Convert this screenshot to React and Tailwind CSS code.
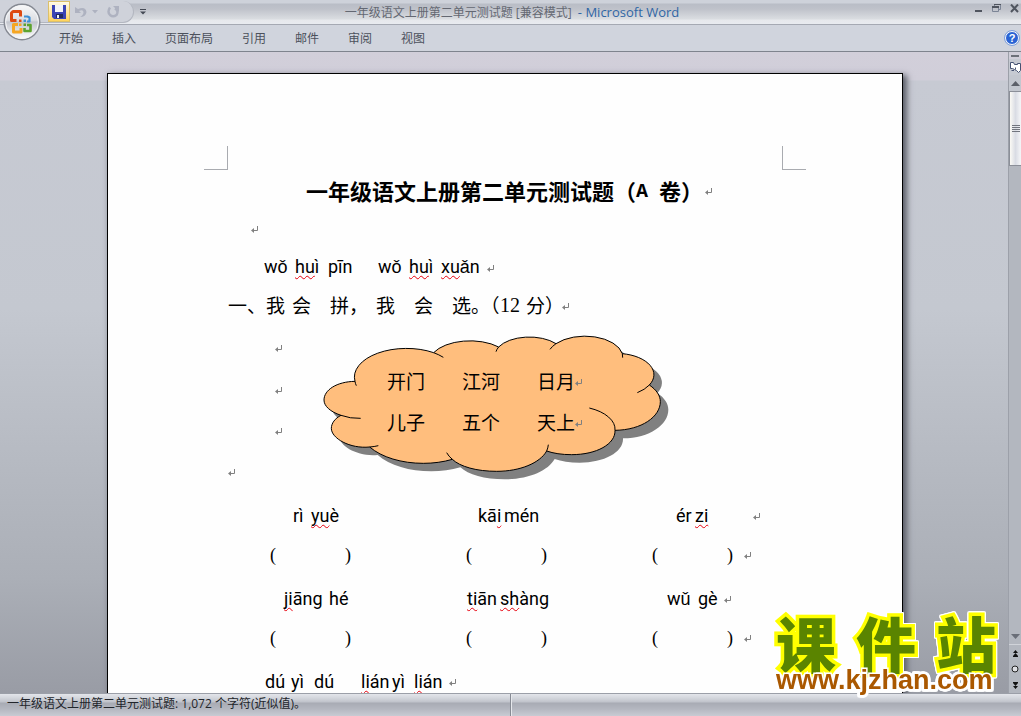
const RIBBON_TABS = ['开始', '插入', '页面布局', '引用', '邮件', '审阅', '视图']

// each word: cell width, text flagged by the spell checker, and the rest
const PINYIN_HEADING = [
  { w: 'w-[31px]', text: 'wǒ' },
  { w: 'w-[33px]', wavy: 'hu', text: 'ì' },
  { w: 'w-[50px]', text: 'pīn' },
  { w: 'w-[31px]', text: 'wǒ' },
  { w: 'w-[32px]', wavy: 'hu', text: 'ì' },
  { w: 'w-[46px]', wavy: 'xu', text: 'ǎn' },
]

const PINYIN_ROW_1 = [
  { w: 'w-[18px]', text: 'rì' },
  { w: 'w-[167px]', wavy: 'yu', text: 'è' },
  { w: 'w-[26px]', before: 'kā', wavy: 'i' },
  { w: 'w-[172px]', text: 'mén' },
  { w: 'w-[19px]', text: 'ér' },
  { w: 'w-[58px]', wavy: 'zi' },
]

const PINYIN_ROW_2 = [
  { w: 'w-[45px]', wavy: 'ji', text: 'āng' },
  { w: 'w-[138px]', text: 'hé' },
  { w: 'w-[33px]', wavy: 'ti', text: 'ān' },
  { w: 'w-[167px]', wavy: 'sh', text: 'àng' },
  { w: 'w-[31px]', text: 'wǔ' },
  { w: 'w-[26px]', text: 'gè' },
]

const PINYIN_ROW_3 = [
  { w: 'w-[26px]', text: 'dú' },
  { w: 'w-[23px]', text: 'yì' },
  { w: 'w-[47px]', text: 'dú' },
  { w: 'w-[31px]', wavy: 'li', text: 'án' },
  { w: 'w-[22px]', text: 'yì' },
  { w: 'w-[35px]', wavy: 'li', text: 'án' },
]

const CLOUD_WORDS = [
  ['开门', '江河', '日月'],
  ['儿子', '五个', '天上'],
]

const CLOUD_OUTLINE =
  'M285 169A156 86 0 0 1 521 83A122 64 0 0 1 716 66A103 54 0 0 1 888 56A114 64 0 0 1 1087 86A112 64 0 0 1 1168 180C1190 195 1201 212 1201 230C1201 275 1145 315 1065 316C1067 357 1010 389 935 389C905 389 880 385 860 378C840 414 780 439 710 439C650 439 600 425 577 403C550 411 520 415 490 415C425 415 365 397 329 366C270 372 214 340 214 310C214 295 225 280 243 271C210 260 192 243 192 225C192 195 230 170 285 169Z'

const CLOUD_CREASES =
  'M285 169Q286 176 289 182M521 83A156 86 0 0 1 550 97M716 66A103 54 0 0 0 708 80M888 56A114 64 0 0 0 870 73M1087 86L1088 98M1168 180A117 66 0 0 1 1132 203M1065 316A130 70 0 0 0 988 249M860 378Q864 369 865 359M577 403Q566 394 560 383M329 366Q343 365 355 362M243 271Q270 281 302 280'

function ReturnMark() {
  return (
    <svg viewBox="0 0 8 8" className="w-2 h-2 mt-[3px] flex-shrink-0" aria-hidden="true">
      <path d="M6.5 0V4.5H1.5" fill="none" stroke="#808080" />
      <path d="M0 4.5L3 2V7Z" fill="#808080" />
    </svg>
  )
}

function PinyinLine({ words, className }) {
  return (
    <p
      className={`flex items-center pt-[5px] whitespace-nowrap font-['Roboto',sans-serif] text-lg ${className}`}
    >
      {words.map(({ w, before, wavy, text }, i) => (
        <span key={i} className={`${w} flex-shrink-0`}>
          {before}
          {wavy && (
            <span className="underline decoration-wavy decoration-red-600 decoration-1 underline-offset-2 [text-decoration-skip-ink:none]">
              {wavy}
            </span>
          )}
          {text}
        </span>
      ))}
      <ReturnMark />
    </p>
  )
}

function BracketLine() {
  return (
    <p className="flex items-center h-[41px] pl-[42px] font-['Liberation_Serif',serif] text-lg">
      <span className="w-[75px]">(</span>
      <span className="w-[121px]">)</span>
      <span className="w-[75px]">(</span>
      <span className="w-[111px]">)</span>
      <span className="w-[75px]">(</span>
      <span className="w-[17px]">)</span>
      <ReturnMark />
    </p>
  )
}

function Cloud() {
  return (
    <div className="absolute left-[95px] top-[7px] w-[346px] h-[147px]">
      <svg viewBox="189 27 1038 441" className="absolute inset-0 w-full h-full" aria-hidden="true">
        <path d={CLOUD_OUTLINE} transform="translate(24 24)" fill="#808080" />
        <path d={CLOUD_OUTLINE} fill="#ffbe7d" stroke="#000" strokeWidth="3" />
        <path d={CLOUD_CREASES} fill="none" stroke="#000" strokeWidth="3" />
      </svg>
      <div className="relative pt-[27px] pl-16">
        {CLOUD_WORDS.map((row) => (
          <p key={row[0]} className="flex items-center h-[41px] text-[19px]">
            <span className="w-[75px]">{row[0]}</span>
            <span className="w-[75px]">{row[1]}</span>
            <span className="w-[38px]">{row[2]}</span>
            <ReturnMark />
          </p>
        ))}
      </div>
    </div>
  )
}

function OfficeButton() {
  return (
    <button aria-label="Office" className="absolute left-[3px] top-[3px] z-10">
      <svg viewBox="0 0 38 38" className="w-[38px] h-[38px]">
        <defs>
          <linearGradient id="orb" x1="0" y1="0" x2="0" y2="1">
            <stop offset="0" stopColor="#fafafb" />
            <stop offset="0.45" stopColor="#dcdee3" />
            <stop offset="0.5" stopColor="#c3c6ce" />
            <stop offset="1" stopColor="#ffffff" />
          </linearGradient>
        </defs>
        <circle cx="19" cy="19" r="17.8" fill="url(#orb)" stroke="#858992" strokeWidth="1.4" />
        <circle cx="19" cy="19" r="16.4" fill="none" stroke="#f4f5f7" />
        <g fill="none" strokeLinejoin="round">
          <path d="M13.500 17.500H8.500V10L10 8.500H17.500V13.500" stroke="#dd4a12" strokeWidth="3" />
          <path d="M21 13.500H24.500L26.500 14.500V18.500H24" stroke="#3d8fd6" strokeWidth="2.200" />
          <path d="M15 21.500H10.500V29H18V25" stroke="#f5a623" strokeWidth="3" />
          <path d="M24 22H27.500V28H21.500V25" stroke="#5da32e" strokeWidth="2.600" />
        </g>
        <path d="M16 16.500h2.500v2.500h-2.500z" fill="#dd4a12" />
        <path d="M20.500 16.500h2.500v2.500h-2.500z" fill="#3d8fd6" />
        <path d="M16 20.500h2.500v2.500h-2.500z" fill="#f5a623" />
        <path d="M20.500 20.500h2.500v2.500h-2.500z" fill="#5da32e" />
      </svg>
    </button>
  )
}

function QuickAccess() {
  return (
    <div className="flex items-center h-[22px] mt-px w-[134px] flex-shrink-0 pl-12 rounded-r-full border-r border-b border-[#b3b7c0] bg-[#cfd2da]">
      <button
        aria-label="保存"
        className="flex items-center justify-center w-[22px] h-[21px] flex-shrink-0 border border-[#dcc06a] bg-linear-to-b from-[#fffbe8] to-[#ffd35a]"
      >
        <svg viewBox="0 0 14 14" className="w-[14px] h-[14px]">
          <path d="M0 0H14V14H2L0 12Z" fill="#3b45b5" />
          <path d="M3 0H11V7H3Z" fill="#f2f4fb" />
          <path d="M4 9H11V13H4Z" fill="#222a5e" />
          <path d="M5 10H7V13H5Z" fill="#f2f4fb" />
        </svg>
      </button>
      <button aria-label="撤消" className="ml-[5px]">
        <svg viewBox="0 0 12 12" className="w-3 h-3">
          <path d="M0 1V7H6L4 5Q8 3 8.500 6Q8.500 9 5 11Q11 11 11.500 6Q10.500 0 3 3Z" fill="#aeb2c0" />
        </svg>
      </button>
      <svg viewBox="0 0 6 4" className="w-[6px] h-1 ml-[5px]" aria-hidden="true">
        <path d="M0 0H6L3 3.500Z" fill="#aeb2c0" />
      </svg>
      <button aria-label="恢复" className="ml-[9px]">
        <svg viewBox="0 0 12 12" className="w-3 h-3">
          <path d="M3 1.500Q0 6 3 9Q6 11.500 9.500 9Q12 5 8 2.500" fill="none" stroke="#aeb2c0" strokeWidth="2.400" />
          <path d="M6 0H12V6Z" fill="#aeb2c0" />
        </svg>
      </button>
    </div>
  )
}

function TitleBar() {
  return (
    <header className="flex items-start h-[25px] flex-shrink-0 border-b border-[#a5a9b3] bg-[linear-gradient(#ced2da_0px,#ced2da_3px,#b9bdc6_4px,#bfc2ca_9px,#dadde1_19px,#e6e8ec_20px,#e8ebf0_24px)]">
      <QuickAccess />
      <button aria-label="自定义快速访问工具栏" className="mt-[9px] ml-[6px]">
        <svg viewBox="0 0 6 6" className="w-[6px] h-[6px]">
          <path d="M0 0H6V1H0ZM0 2.500H6L3 5.500Z" fill="#454a55" />
        </svg>
      </button>
      <h1 className="flex-1 pr-24 text-center text-xs leading-[25px] whitespace-nowrap overflow-hidden text-[#646872] font-['Open_Sans','Noto_Sans_CJK_SC',sans-serif]">
        一年级语文上册第二单元测试题 [兼容模式]{' '}
        <span className="pl-[3px] text-[13px] text-[#2f66a5]">- Microsoft Word</span>
      </h1>
      <div className="flex items-start gap-[9px] pt-1 pr-[2px] text-[#50555f]">
        <button aria-label="最小化">
          <svg viewBox="0 0 9 9" className="w-[9px] h-[9px]">
            <path d="M1 6H8V8H1Z" fill="currentColor" />
          </svg>
        </button>
        <button aria-label="还原">
          <svg viewBox="0 0 9 9" className="w-[9px] h-[9px]">
            <path d="M2.500 2.500V0.500H8.500V5.500H7M0.500 2.500H6.500V7.500H0.500Z" fill="none" stroke="#7c8596" />
            <path d="M2 0H9V1H2ZM0 2H7V4H0Z" fill="currentColor" />
          </svg>
        </button>
        <button aria-label="关闭">
          <svg viewBox="0 0 9 9" className="w-[9px] h-[9px]">
            <path d="M1 0.500L8 8M8 0.500L1 8" stroke="currentColor" strokeWidth="2" />
          </svg>
        </button>
      </div>
    </header>
  )
}

function Ribbon() {
  return (
    <nav className="flex items-center h-[27px] flex-shrink-0 pl-[59px] pr-[2px] border-b border-[#7f848e] bg-[#d0d4dd]">
      <div className="flex flex-1 gap-[29px] text-xs text-[#4c515c]">
        {RIBBON_TABS.map((tab) => (
          <button key={tab} className="whitespace-nowrap">
            {tab}
          </button>
        ))}
      </div>
      <button
        aria-label="帮助"
        className="flex items-center justify-center w-[14px] h-[14px] rounded-full border border-white bg-[#2a63d4] outline outline-[#7fa0dc] text-[11px] leading-none font-bold text-white font-['Liberation_Sans',sans-serif]"
      >
        ?
      </button>
    </nav>
  )
}

function ScrollBar() {
  return (
    <div className="flex flex-col items-center w-[13px] flex-shrink-0 border-l border-[#9ca0a9] bg-[#b3b7bf]">
      <div className="w-full h-[7px] flex-shrink-0 pt-[3px] pl-[2px] bg-[#d0ced9]">
        <div className="h-[2px] w-2 bg-[#6c7079]" />
      </div>
      <button aria-label="标尺" className="flex items-center justify-center w-full h-4 flex-shrink-0 bg-[#c6cad2]">
        <svg viewBox="0 0 12 12" className="w-3 h-3">
          <path d="M1.500 1.500H4.500L5.500 3.500H8.500V2.500H11.500V9.500L9.500 11.500L7.500 9.500L5.500 8.500L3.500 7.500H1.500Z" fill="#fff" stroke="#465373" />
          <path d="M6.500 6.500V8.500M2.500 9.500H5" fill="none" stroke="#465373" />
        </svg>
      </button>
      <button aria-label="向上滚动" className="flex items-center justify-center w-full h-4 flex-shrink-0 bg-[#c3c7cf]">
        <svg viewBox="0 0 9 5" className="w-[9px] h-[5px]">
          <path d="M0 5L4.500 0L9 5Z" fill="#5c6069" />
        </svg>
      </button>
      <div className="flex flex-col items-center justify-center gap-px w-full h-[75px] flex-shrink-0 border border-r-0 border-[#8b8f98] bg-linear-to-r from-[#fbfaf5] via-[#d9dce4] to-[#f5f6f8]">
        <div className="w-2 h-px bg-[#71757e]" />
        <div className="w-2 h-px bg-[#71757e]" />
        <div className="w-2 h-px bg-[#71757e]" />
        <div className="w-2 h-px bg-[#71757e]" />
      </div>
      <div className="flex-1" />
      <button aria-label="向下滚动" className="flex items-center justify-center w-full h-4 flex-shrink-0 border-b border-[#d0d3d9]">
        <svg viewBox="0 0 9 5" className="w-[9px] h-[5px]">
          <path d="M0 0L4.500 5L9 0Z" fill="#6a6e78" />
        </svg>
      </button>
      <button aria-label="前一页" className="flex items-center justify-center h-4 flex-shrink-0">
        <svg viewBox="0 0 5 7" className="w-[5px] h-[7px]">
          <path d="M2.500 0L5 3H0ZM2.500 3L5 6H0ZM0 6H5V7H0Z" fill="#111" />
        </svg>
      </button>
      <button aria-label="选择浏览对象" className="flex items-center justify-center h-4 flex-shrink-0">
        <svg viewBox="0 0 8 8" className="w-2 h-2">
          <circle cx="4" cy="4" r="3" fill="#dedfe3" stroke="#222" />
        </svg>
      </button>
      <button aria-label="下一页" className="flex items-center justify-center h-4 flex-shrink-0">
        <svg viewBox="0 0 5 7" className="w-[5px] h-[7px]">
          <path d="M2.500 7L5 4H0ZM2.500 4L5 1H0ZM0 0H5V1H0Z" fill="#111" />
        </svg>
      </button>
    </div>
  )
}

function Page() {
  return (
    <article className="w-[796px] mx-auto translate-x-px h-[800px] pt-[72px] border border-black bg-[#fefefe] shadow-[3px_3px_6px_1px_#5b5e68] text-black">
      {/* margin corners */}
      <div className="flex justify-between px-24">
        <div className="w-6 h-6 border-r border-b border-[#a9abb0]" />
        <div className="w-6 h-6 border-l border-b border-[#a9abb0]" />
      </div>

      <div className="px-[120px]">
        <h2 className="flex items-center h-10 pl-[78px] text-[22px] font-bold whitespace-nowrap">
          <span>一年级语文上册第二单元测试题（</span>
          <span className="w-[23px] pt-1 font-['Liberation_Mono',monospace] text-xl">A</span>
          <span className="w-[46px]">卷）</span>
          <ReturnMark />
        </h2>
        <p className="flex items-center h-[36px] pl-[23px]">
          <ReturnMark />
        </p>

        <PinyinLine words={PINYIN_HEADING} className="h-[37px] pl-9" />

        <p className="flex items-center h-[44px] text-[19px] whitespace-nowrap">
          <span className="w-[38px]">一、</span>
          <span className="w-[26px]">我</span>
          <span className="w-[38px]">会</span>
          <span className="w-[46px]">拼，</span>
          <span className="w-[38px]">我</span>
          <span className="w-[38px]">会</span>
          <span className="w-[48px]">选。（</span>
          <span className="w-[26px] font-['Liberation_Serif',serif] text-xl">12</span>
          <span className="w-[36px]">分）</span>
          <ReturnMark />
        </p>

        <div className="relative">
          <div className="h-[41px] flex items-center pl-[47px]"><ReturnMark /></div>
          <div className="h-[42px] flex items-center pl-[47px]"><ReturnMark /></div>
          <div className="h-[41px] flex items-center pl-[47px]"><ReturnMark /></div>
          <div className="h-[41px] flex items-center"><ReturnMark /></div>
          <Cloud />
        </div>

        <PinyinLine words={PINYIN_ROW_1} className="h-[42px] pl-[65px]" />
        <BracketLine />
        <PinyinLine words={PINYIN_ROW_2} className="h-[42px] pl-[56px]" />
        <BracketLine />
        <PinyinLine words={PINYIN_ROW_3} className="h-[42px] pl-[37px]" />
      </div>
    </article>
  )
}

function StatusBar() {
  return (
    <footer className="flex h-[23px] flex-shrink-0 border-t border-[#9b9fa8] text-xs text-[#22252b] bg-[linear-gradient(#e3e5ea_0px,#d3d6dc_4px,#c0c3cb_8px,#a8abb4_9px,#b4b7c0_15px,#c8cbd3_22px)]">
      <div className="w-1/2 pl-[7px] leading-5 whitespace-nowrap border-r border-[#878b94] font-['Open_Sans','Noto_Sans_CJK_SC',sans-serif]">
        一年级语文上册第二单元测试题: 1,072 个字符(近似值)。
      </div>
      <div className="flex-1 border-l border-[#e6e8ec]" />
    </footer>
  )
}

function SiteMark() {
  return (
    <div className="absolute right-[21px] bottom-6 w-[228px] whitespace-nowrap [filter:drop-shadow(1px_0_#fff)_drop-shadow(-1px_0_#fff)_drop-shadow(0_1px_#fff)_drop-shadow(0_-1px_#fff)]">
      <div className="flex justify-between px-1 text-[60px] leading-[52px] font-black text-[#5a8400] [-webkit-text-stroke:7px_#ffff00] [paint-order:stroke_fill] [stroke-linejoin:round]">
        <span>课</span>
        <span>件</span>
        <span>站</span>
      </div>
      <div className="text-[27px] leading-[24px] pl-1 font-bold text-[#aa5800] [-webkit-text-stroke:3px_#fff] [paint-order:stroke_fill] font-['Liberation_Sans',sans-serif]">
        www.kjzhan.com
      </div>
    </div>
  )
}

export default function App() {
  return (
    <div className="relative flex flex-col h-screen overflow-hidden font-['Noto_Sans_CJK_SC',sans-serif]">
      <OfficeButton />
      <TitleBar />
      <Ribbon />
      <main className="flex flex-1 min-h-0">
        <div className="flex-1 min-w-0 overflow-hidden pt-[21px] bg-[linear-gradient(#d2cfda_0px,#d0ced9_28px,#c7cad3_29px,#c4c8d0_40%,#abafb7_82%,#999ca5_100%)]">
          <Page />
        </div>
        <ScrollBar />
      </main>
      <StatusBar />
      <SiteMark />
    </div>
  )
}
